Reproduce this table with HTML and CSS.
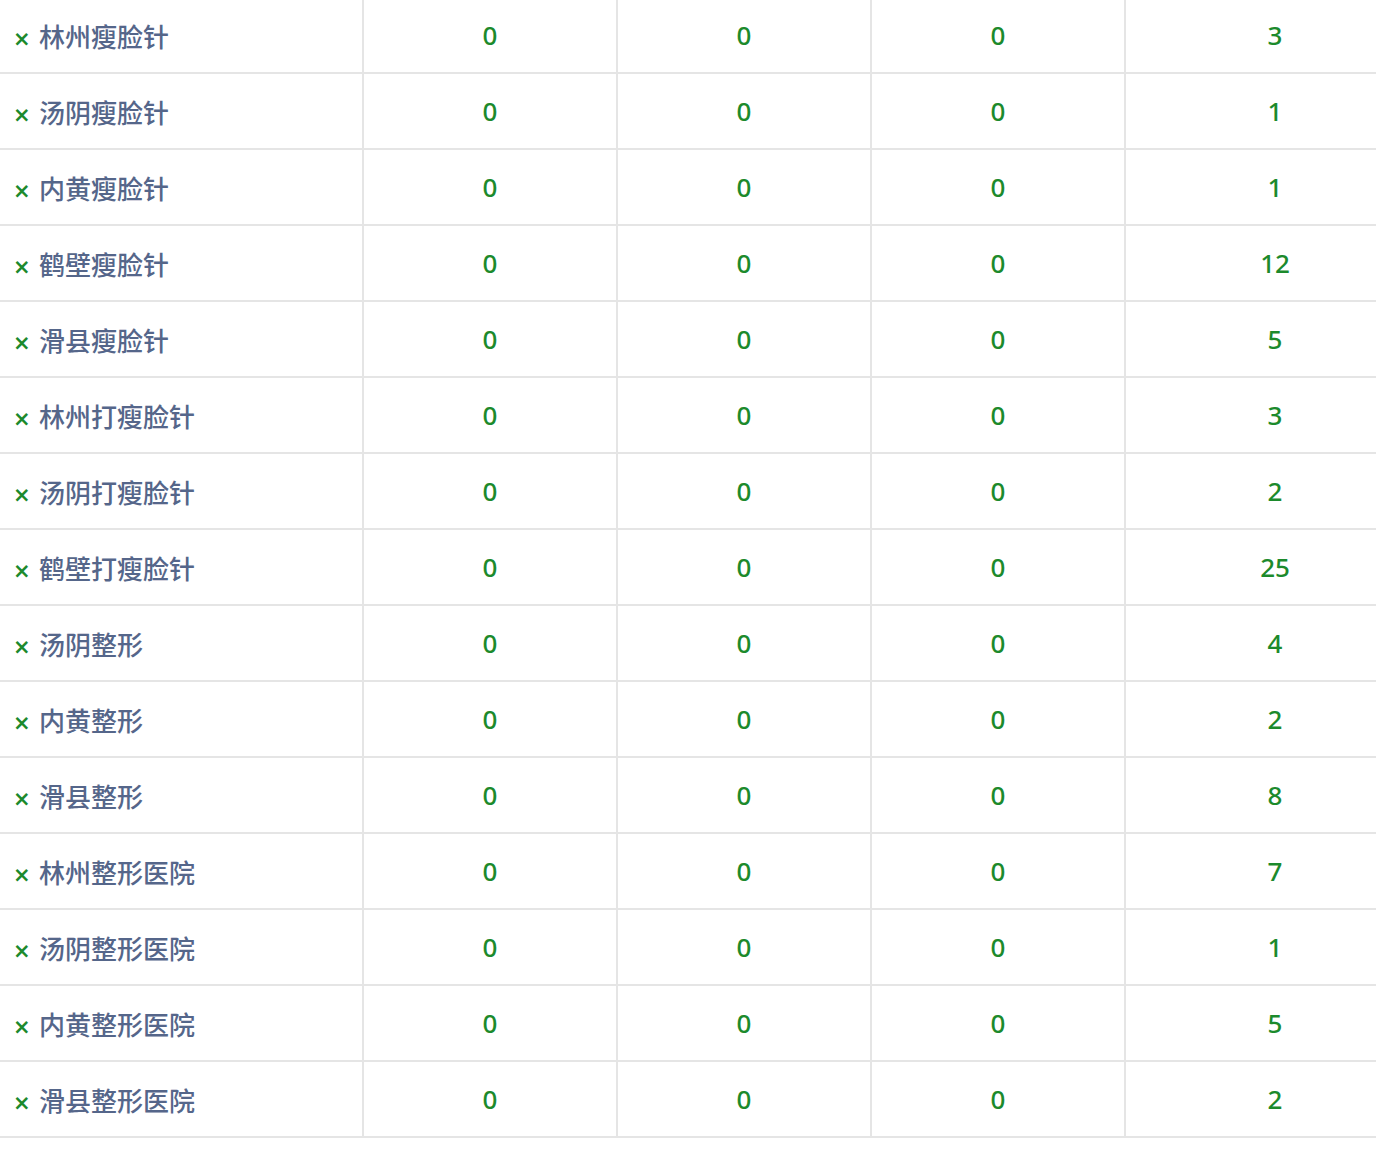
FILE: index.html
```html
<!DOCTYPE html>
<html lang="zh-CN">
<head>
<meta charset="utf-8">
<title>表格</title>
<link rel="stylesheet" href="styles.css">
</head>
<body>
<table class="grid">
<colgroup><col class="c-name"><col class="c-num"><col class="c-num"><col class="c-num"><col class="c-last"></colgroup>
<tbody>
<tr><td class="name"><span class="x">×</span>林州瘦脸针</td><td>0</td><td>0</td><td>0</td><td>3</td></tr>
<tr><td class="name"><span class="x">×</span>汤阴瘦脸针</td><td>0</td><td>0</td><td>0</td><td>1</td></tr>
<tr><td class="name"><span class="x">×</span>内黄瘦脸针</td><td>0</td><td>0</td><td>0</td><td>1</td></tr>
<tr><td class="name"><span class="x">×</span>鹤壁瘦脸针</td><td>0</td><td>0</td><td>0</td><td>12</td></tr>
<tr><td class="name"><span class="x">×</span>滑县瘦脸针</td><td>0</td><td>0</td><td>0</td><td>5</td></tr>
<tr><td class="name"><span class="x">×</span>林州打瘦脸针</td><td>0</td><td>0</td><td>0</td><td>3</td></tr>
<tr><td class="name"><span class="x">×</span>汤阴打瘦脸针</td><td>0</td><td>0</td><td>0</td><td>2</td></tr>
<tr><td class="name"><span class="x">×</span>鹤壁打瘦脸针</td><td>0</td><td>0</td><td>0</td><td>25</td></tr>
<tr><td class="name"><span class="x">×</span>汤阴整形</td><td>0</td><td>0</td><td>0</td><td>4</td></tr>
<tr><td class="name"><span class="x">×</span>内黄整形</td><td>0</td><td>0</td><td>0</td><td>2</td></tr>
<tr><td class="name"><span class="x">×</span>滑县整形</td><td>0</td><td>0</td><td>0</td><td>8</td></tr>
<tr><td class="name"><span class="x">×</span>林州整形医院</td><td>0</td><td>0</td><td>0</td><td>7</td></tr>
<tr><td class="name"><span class="x">×</span>汤阴整形医院</td><td>0</td><td>0</td><td>0</td><td>1</td></tr>
<tr><td class="name"><span class="x">×</span>内黄整形医院</td><td>0</td><td>0</td><td>0</td><td>5</td></tr>
<tr><td class="name"><span class="x">×</span>滑县整形医院</td><td>0</td><td>0</td><td>0</td><td>2</td></tr>
</tbody>
</table>
</body>
</html>
```
FILE: styles.css
```css
html, body {
  margin: 0;
  padding: 0;
  background: #fff;
  overflow: hidden;
}
body {
  font-family: "Noto Sans", "Noto Sans CJK SC", sans-serif;
}
.grid {
  border-collapse: separate;
  border-spacing: 0;
  table-layout: fixed;
  width: 1424px;
  margin-top: -2px;
}
.c-name { width: 362px; }
.c-num { width: 254px; }
.c-last { width: 300px; }
.grid td {
  height: 74px;
  padding: 0;
  border-bottom: 2px solid #e5e5e5;
  border-left: 2px solid #e5e5e5;
  text-align: center;
  vertical-align: middle;
  color: #1c8a2c;
  font-size: 26px;
  font-weight: 500;
  line-height: 30px;
}
.grid td.name {
  border-left: none;
  text-align: left;
  padding-left: 13px;
  padding-top: 4px;
  height: 70px;
  color: #55668a;
  font-family: "Noto Sans CJK SC", sans-serif;
  font-size: 26px;
  font-weight: 500;
}
.x {
  display: inline-block;
  color: #1c8a2c;
  font-family: "DejaVu Sans", sans-serif;
  font-weight: bold;
  font-size: 21px;
  width: 26px;
  vertical-align: 1px;
}
```
